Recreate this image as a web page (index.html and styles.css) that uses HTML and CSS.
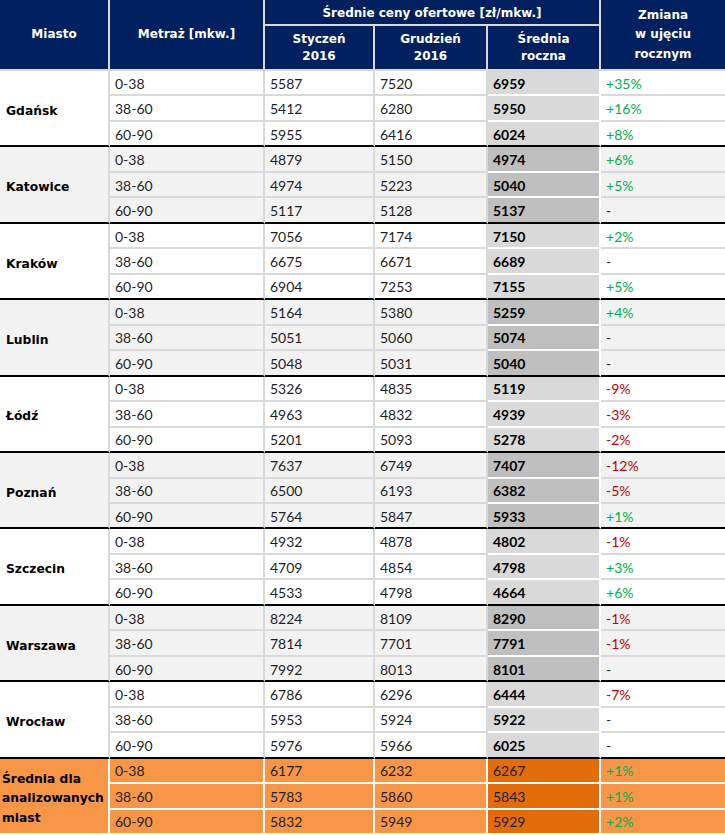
FILE: index.html
```html
<!DOCTYPE html>
<html lang="pl">
<head>
<meta charset="utf-8">
<title>Średnie ceny ofertowe</title>
<link rel="stylesheet" href="styles.css">
</head>
<body>
<table class="prices">
  <colgroup>
    <col class="c-city"><col class="c-size"><col class="c-jan"><col class="c-dec"><col class="c-avg"><col class="c-chg">
  </colgroup>
  <thead>
    <tr class="h1">
      <th rowspan="2">Miasto</th>
      <th rowspan="2">Metraż [mkw.]</th>
      <th colspan="3" class="group-title">Średnie ceny ofertowe [zł/mkw.]</th>
      <th rowspan="2" class="chg-head">Zmiana<br>w ujęciu<br>rocznym</th>
    </tr>
    <tr class="h2">
      <th>Styczeń<br>2016</th>
      <th>Grudzień<br>2016</th>
      <th>Średnia<br>roczna</th>
    </tr>
  </thead>
  <tbody>
    <tr><td rowspan="3" class="city">Gdańsk</td><td>0-38</td><td>5587</td><td>7520</td><td class="avg">6959</td><td class="up">+35%</td></tr>
    <tr><td>38-60</td><td>5412</td><td>6280</td><td class="avg">5950</td><td class="up">+16%</td></tr>
    <tr class="last"><td>60-90</td><td>5955</td><td>6416</td><td class="avg">6024</td><td class="up">+8%</td></tr>

    <tr class="g"><td rowspan="3" class="city">Katowice</td><td>0-38</td><td>4879</td><td>5150</td><td class="avg">4974</td><td class="up">+6%</td></tr>
    <tr class="g"><td>38-60</td><td>4974</td><td>5223</td><td class="avg">5040</td><td class="up">+5%</td></tr>
    <tr class="g last"><td>60-90</td><td>5117</td><td>5128</td><td class="avg">5137</td><td>-</td></tr>

    <tr><td rowspan="3" class="city">Kraków</td><td>0-38</td><td>7056</td><td>7174</td><td class="avg">7150</td><td class="up">+2%</td></tr>
    <tr><td>38-60</td><td>6675</td><td>6671</td><td class="avg">6689</td><td>-</td></tr>
    <tr class="last"><td>60-90</td><td>6904</td><td>7253</td><td class="avg">7155</td><td class="up">+5%</td></tr>

    <tr class="g"><td rowspan="3" class="city">Lublin</td><td>0-38</td><td>5164</td><td>5380</td><td class="avg">5259</td><td class="up">+4%</td></tr>
    <tr class="g"><td>38-60</td><td>5051</td><td>5060</td><td class="avg">5074</td><td>-</td></tr>
    <tr class="g last"><td>60-90</td><td>5048</td><td>5031</td><td class="avg">5040</td><td>-</td></tr>

    <tr><td rowspan="3" class="city">Łódź</td><td>0-38</td><td>5326</td><td>4835</td><td class="avg">5119</td><td class="down">-9%</td></tr>
    <tr><td>38-60</td><td>4963</td><td>4832</td><td class="avg">4939</td><td class="down">-3%</td></tr>
    <tr class="last"><td>60-90</td><td>5201</td><td>5093</td><td class="avg">5278</td><td class="down">-2%</td></tr>

    <tr class="g"><td rowspan="3" class="city">Poznań</td><td>0-38</td><td>7637</td><td>6749</td><td class="avg">7407</td><td class="down">-12%</td></tr>
    <tr class="g"><td>38-60</td><td>6500</td><td>6193</td><td class="avg">6382</td><td class="down">-5%</td></tr>
    <tr class="g last"><td>60-90</td><td>5764</td><td>5847</td><td class="avg">5933</td><td class="up">+1%</td></tr>

    <tr><td rowspan="3" class="city">Szczecin</td><td>0-38</td><td>4932</td><td>4878</td><td class="avg">4802</td><td class="down">-1%</td></tr>
    <tr><td>38-60</td><td>4709</td><td>4854</td><td class="avg">4798</td><td class="up">+3%</td></tr>
    <tr class="last"><td>60-90</td><td>4533</td><td>4798</td><td class="avg">4664</td><td class="up">+6%</td></tr>

    <tr class="g"><td rowspan="3" class="city">Warszawa</td><td>0-38</td><td>8224</td><td>8109</td><td class="avg">8290</td><td class="down">-1%</td></tr>
    <tr class="g"><td>38-60</td><td>7814</td><td>7701</td><td class="avg">7791</td><td class="down">-1%</td></tr>
    <tr class="g last"><td>60-90</td><td>7992</td><td>8013</td><td class="avg">8101</td><td>-</td></tr>

    <tr><td rowspan="3" class="city">Wrocław</td><td>0-38</td><td>6786</td><td>6296</td><td class="avg">6444</td><td class="down">-7%</td></tr>
    <tr><td>38-60</td><td>5953</td><td>5924</td><td class="avg">5922</td><td>-</td></tr>
    <tr class="last"><td>60-90</td><td>5976</td><td>5966</td><td class="avg">6025</td><td>-</td></tr>

    <tr class="o"><td rowspan="3" class="city">Średnia dla<br>analizowanych<br>miast</td><td>0-38</td><td>6177</td><td>6232</td><td class="avg">6267</td><td class="up">+1%</td></tr>
    <tr class="o"><td>38-60</td><td>5783</td><td>5860</td><td class="avg">5843</td><td class="up">+1%</td></tr>
    <tr class="o"><td>60-90</td><td>5832</td><td>5949</td><td class="avg">5929</td><td class="up">+2%</td></tr>
  </tbody>
</table>
</body>
</html>
```
FILE: styles.css
```css
body {
  margin: 0;
  background: #ffffff;
  font-family: Lato, "Noto Sans", sans-serif;
}

.prices {
  border-collapse: separate;
  border-spacing: 0;
  table-layout: fixed;
  width: 725px;
}

.c-city { width: 110px; }
.c-size { width: 155px; }
.c-jan { width: 110px; }
.c-dec { width: 113px; }
.c-avg { width: 113px; }
.c-chg { width: 124px; }

.prices th {
  background: #002060;
  color: #ffffff;
  font-family: "DejaVu Sans", sans-serif;
  font-weight: bold;
  font-size: 12px;
  line-height: 17px;
  text-align: center;
  vertical-align: middle;
  padding: 0;
  border-right: 2px solid #d9d9d9;
  border-bottom: 2px solid #d9d9d9;
}

.prices .h1 { height: 26px; }
.prices .h2 { height: 45px; }

.prices .group-title { padding-top: 3px; }

.prices .chg-head {
  border-right: none;
  line-height: 19.5px;
  padding-top: 1px;
}

.prices tbody tr { height: 25.47px; }

.prices td {
  padding: 1px 5px 0;
  font-size: 14px;
  color: #1f1f1f;
  white-space: nowrap;
  vertical-align: middle;
  background: #ffffff;
  border-right: 2px solid #d9d9d9;
  border-bottom: 2px solid #d9d9d9;
}

.prices td:last-child { border-right: none; }

.prices td.city {
  font-family: "DejaVu Sans", sans-serif;
  font-weight: bold;
  font-size: 12.3px;
  color: #000000;
  padding: 5px 4px 0 6px;
  border-bottom: 2px solid #000000;
}

.prices td.avg {
  background: #d9d9d9;
  font-weight: bold;
  color: #000000;
  border-right-color: #ffffff;
  border-bottom-color: #ffffff;
}

.prices td.up { color: #00b050; }
.prices td.down { color: #c00000; }

.prices tr.g td { background: #f2f2f2; }
.prices tr.g td.avg { background: #bfbfbf; }

.prices tr.last td { border-bottom: 2px solid #000000; }

.prices tr.o td {
  background: #f79646;
  border-right-color: #ffffff;
  border-bottom-color: #ffffff;
}

.prices tr.o td.avg {
  background: #e26b0a;
  font-weight: normal;
  color: #1f1f1f;
}

.prices tr.o td.city {
  line-height: 19.5px;
  white-space: normal;
  padding: 6px 2px 0 2px;
  border-bottom: 2px solid #ffffff;
  color: #000000;
}
```
